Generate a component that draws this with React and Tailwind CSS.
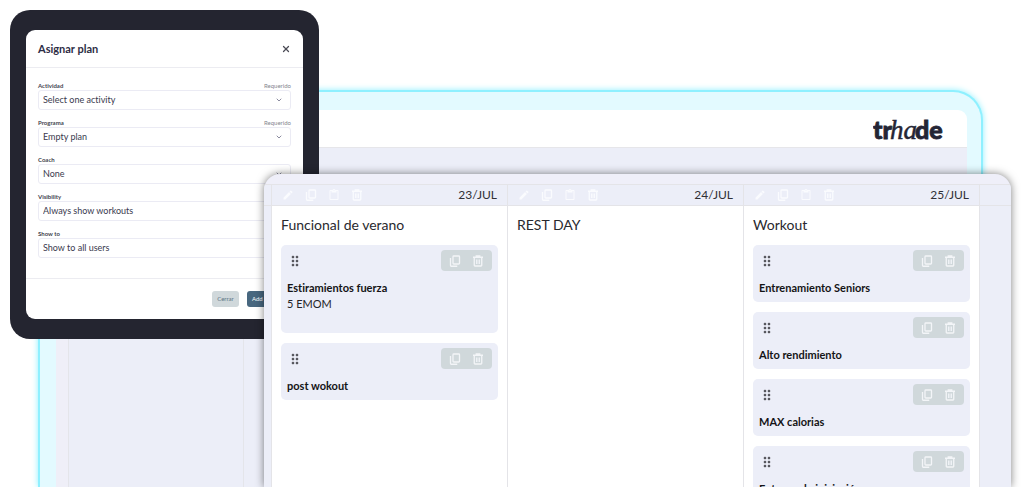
import { ChevronDown, X } from "lucide-react";
import { MdDragIndicator, MdEdit, MdContentPaste } from "react-icons/md";

const fields = [
  { id: "activity", label: "Actividad", value: "Select one activity", required: true },
  { id: "program", label: "Programa", value: "Empty plan", required: true },
  { id: "coach", label: "Coach", value: "None" },
  { id: "visibility", label: "Visibility", value: "Always show workouts" },
  { id: "showTo", label: "Show to", value: "Show to all users" },
];

const days = [
  {
    date: "23/JUL",
    title: "Funcional de verano",
    cards: [
      { title: "Estiramientos fuerza", detail: "5 EMOM" },
      { title: "post wokout" },
    ],
  },
  { date: "24/JUL", title: "REST DAY", cards: [] },
  {
    date: "25/JUL",
    title: "Workout",
    cards: [
      { title: "Entrenamiento Seniors" },
      { title: "Alto rendimiento" },
      { title: "MAX calorias" },
      { title: "Entreno de iniciación" },
    ],
  },
];

function CopyIcon() {
  return (
    <svg viewBox="0 0 24 24" className="size-3" fill="none" stroke="currentColor" strokeWidth="2.6">
      <rect x="8" y="2" width="13" height="16" rx="1.5" />
      <path d="M3 6v15a1.5 1.5 0 0 0 1.5 1.5h12" />
    </svg>
  );
}

function TrashIcon() {
  return (
    <svg viewBox="0 0 24 24" className="size-3" fill="none" stroke="currentColor" strokeWidth="2.6">
      <path d="M2 4.5h20M8.5 4V2h7v2M4.5 4.5v16a1.5 1.5 0 0 0 1.5 1.5h12a1.5 1.5 0 0 0 1.5-1.5v-16" />
      <path d="M9 9v9M12 9v9M15 9v9" strokeWidth="1.8" />
    </svg>
  );
}

function Field({ id, label, value, required }) {
  return (
    <div>
      <div className="flex h-[9px] items-center justify-between text-[6px] leading-[9px]">
        <label htmlFor={id} className="font-bold text-[#44444f]">{label}</label>
        {required && <span className="text-[#85858f]">Requerido</span>}
      </div>
      <div className="relative">
        <select
          id={id}
          className="block h-5 w-full appearance-none rounded-[3px] border border-[#ebebf4] bg-white px-1 text-[9px] text-[#3a3a4e]"
        >
          <option>{value}</option>
        </select>
        <ChevronDown className="pointer-events-none absolute top-1.5 right-2 size-2 text-[#74748c]" strokeWidth={2.5} />
      </div>
    </div>
  );
}

function AssignPlanDialog() {
  return (
    <section
      role="dialog"
      aria-labelledby="dialog-title"
      className="absolute top-2.5 left-2.5 w-[309px] rounded-[20px] bg-[#242530] px-4 py-5"
    >
      <div className="rounded-[9px] bg-white">
        <header className="flex h-[38px] items-center justify-between border-b border-[#ececf1] px-3">
          <h2 id="dialog-title" className="text-[11px] leading-4 font-bold text-[#2d2d45]">Asignar plan</h2>
          <button aria-label="Cerrar" className="text-[#4b4b55]">
            <X className="size-2.5" strokeWidth={3} />
          </button>
        </header>
        <form className="flex flex-col gap-2 px-3 pt-[13px] pb-5">
          {fields.map((field) => (
            <Field key={field.id} {...field} />
          ))}
        </form>
        <footer className="flex justify-end gap-2 border-t border-[#ececf1] px-3 py-3 text-[6px] leading-4">
          <button className="w-[27px] rounded-[3px] bg-[#d0d8db] text-[#5a7285]">Cerrar</button>
          <button className="w-11 rounded-[3px] bg-[#48677f] px-[5px] text-left text-white">Add plan</button>
        </footer>
      </div>
    </section>
  );
}

function WorkoutCard({ title, detail }) {
  return (
    <article
      className={
        detail
          ? "h-[88px] rounded-[5px] bg-[#eceef8] px-1.5 pt-[5px]"
          : "h-[57px] rounded-[5px] bg-[#eceef8] px-1.5 pt-[5px]"
      }
    >
      <div className="flex items-center justify-between">
        <MdDragIndicator className="size-4 text-[#55555c]" />
        <div className="flex h-[21px] w-[51px] items-center justify-around rounded-[4px] bg-[#d0d8db] px-0.5 text-[#f3f5f8]">
          <button aria-label="Copiar"><CopyIcon /></button>
          <button aria-label="Eliminar"><TrashIcon /></button>
        </div>
      </div>
      <h4 className="mt-[9px] text-[11px] leading-4 font-bold text-[#141416]">{title}</h4>
      {detail && <p className="text-[11px] leading-4 text-[#242428]">{detail}</p>}
    </article>
  );
}

function DayColumn({ date, title, cards }) {
  return (
    <section className="flex-1 border-r border-[#e4e4e8] bg-white">
      <header className="flex h-[22px] items-center justify-between border-y border-[#e4e4e8] bg-[#eceef8] px-2.5">
        <div className="flex items-center gap-[11px] text-[#fafbfe]">
          <button aria-label="Editar"><MdEdit className="size-3" /></button>
          <button aria-label="Copiar"><CopyIcon /></button>
          <button aria-label="Pegar"><MdContentPaste className="size-3" /></button>
          <button aria-label="Eliminar"><TrashIcon /></button>
        </div>
        <span className="text-[12px] text-[#303036]">{date}</span>
      </header>
      <div className="px-[9px] pt-[9px]">
        <h3 className="text-[14px] leading-5 text-[#29292e]">{title}</h3>
        <div className="mt-2.5 flex flex-col gap-2.5">
          {cards.map((card) => (
            <WorkoutCard key={card.title} {...card} />
          ))}
        </div>
      </div>
    </section>
  );
}

function Calendar() {
  return (
    <section className="absolute top-[174px] right-[13px] bottom-0 left-[264px] flex flex-col overflow-hidden rounded-t-2xl bg-[#efeff9] pt-2.5 shadow-[0_0_8px_rgba(0,0,0,0.5)]">
      <div className="flex flex-1">
        <div className="w-2 border-r border-[#e4e4e8] bg-[#eceef8]">
          <div className="h-[22px] border-y border-[#e4e4e8]" />
        </div>
        {days.map((day) => (
          <DayColumn key={day.date} {...day} />
        ))}
        <div className="w-[31px] bg-[#eceef8]">
          <div className="h-[22px] border-y border-[#e4e4e8]" />
        </div>
      </div>
    </section>
  );
}

// Wordmark: heavy sans around an italic serif "ha"
function Logo() {
  return (
    <a href="#" aria-label="trhade" className="block">
      <svg viewBox="0 0 70 32" className="h-8 w-[70px]" fill="#242535" stroke="#242535">
        <g fontFamily="Lato, sans-serif" fontSize="25" fontWeight="900" strokeWidth="0.8">
          <text x="0" y="26">tr</text>
          <text x="42" y="26">de</text>
        </g>
        <text x="17" y="26" fontFamily="Liberation Serif, serif" fontSize="27" fontStyle="italic" strokeWidth="0.5">
          ha
        </text>
      </svg>
    </a>
  );
}

export default function App() {
  return (
    <main className="relative flex h-screen flex-col overflow-hidden bg-white pt-[90px] pr-[41px] pl-[38px] font-[Lato,'Open_Sans',sans-serif] [font-variant-ligatures:none]">
      <div className="flex flex-1 flex-col rounded-t-[30px] border-2 border-b-0 border-[#8ff0ff] bg-[#e3faff] pt-[18px] pr-3.5 pl-4 shadow-[0_0_6px_#8ff0ff]">
        <header className="flex h-[38px] items-center justify-end rounded-t-[9px] border-b border-[#e6e6ea] bg-white pr-6">
          <Logo />
        </header>
        <div className="flex flex-1 bg-[#efeff8] pl-3">
          <div className="w-44 border-x border-[#e4e5ea] bg-[#eceef8]" />
          <div className="flex-1 bg-[#eceef8]" />
        </div>
      </div>
      <AssignPlanDialog />
      <Calendar />
    </main>
  );
}
